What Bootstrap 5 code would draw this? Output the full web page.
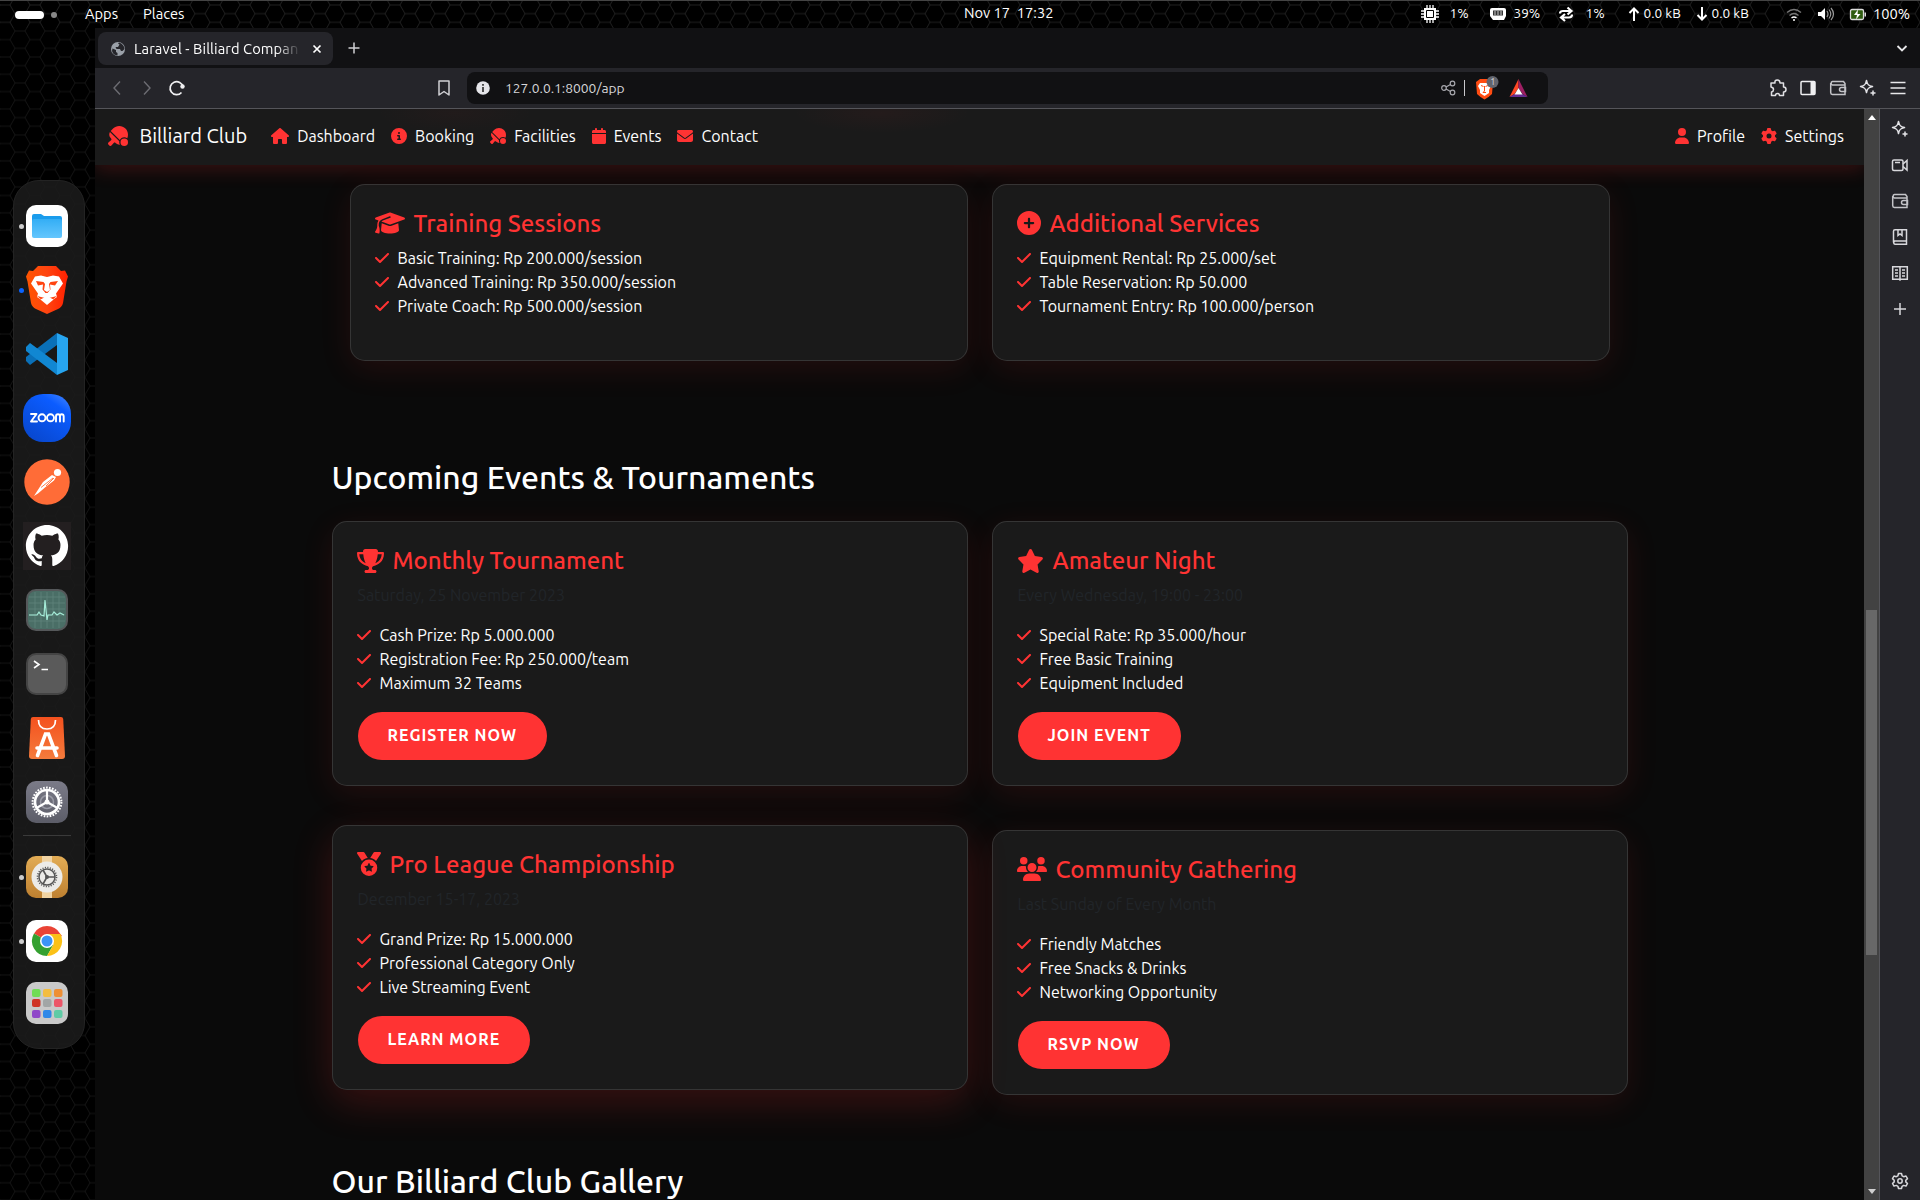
<!DOCTYPE html>
<html lang="en" data-bs-theme="dark">
<head>
<meta charset="utf-8">
<title>Laravel - Billiard Company</title>
<link href="https://cdn.jsdelivr.net/npm/bootstrap@5.3.0/dist/css/bootstrap.min.css" rel="stylesheet">
<style>
:root { --red: #ff3333; --chrome: #25252a; --strip: #111113; }
body { width: 1920px; height: 1200px; overflow: hidden; background: #000; color: #fff; font-family: Ubuntu, "Noto Sans", sans-serif; font-size: 16px; line-height: 24px; }
svg { display: block; flex: none; }
span { white-space: nowrap; display: inline-block; }
.wallpaper { position: absolute; inset: 0; }
.desktop { position: relative; width: 1920px; height: 1200px; }
/* top panel */
.panel { height: 28px; border-top: 1px solid #444; font-size: 14.667px; line-height: 25px; display: grid; grid-template-columns: 85px 58px 821px 456px 500px; }
.panel-status { display: grid; height: 25px; grid-template-columns: 30px 38px 26px 42px 30px 40px 18px 50px 18px 72px 31px 34px 24px 47px; align-items: center; }
.clock { line-height: 23px; }
.net { font-size: 13.6px; margin-left: -.5px; }
.pill { width: 29px; height: 8px; border-radius: 4px; background: #fff; margin-left: 15px; }
.pill-dot { width: 6px; height: 6px; border-radius: 50%; background: #888; margin-left: 7px; }
/* dock */
.dock-col { width: 95px; padding: 152px 0 0 13px; }
.dock { width: 72px; height: 869px; border-radius: 26px; background: rgba(28,28,28,.86); border: 1px solid #232323; padding-top: 13px; }
.dock-item { height: 64px; width: 66px; display: flex; align-items: center; justify-content: center; position: relative; }
.dock-item.running::before { content: ""; position: absolute; left: 5px; width: 5px; height: 5px; border-radius: 50%; background: #ccc; }
.dock-item.focused::before { background: #0a63ff; }
.dock-sep { width: 48px; height: 1px; margin: 1px 9px 9px; background: #3a3a3a; }
/* browser */
.tabstrip { height: 40px; background: var(--strip); padding: 4px 0 0 3px; font-size: 14.667px; }
.tab-box { width: 235px; height: 33px; border-radius: 8px; background: var(--chrome); padding: 0 10px 0 12px; }
.tab-title { width: 167px; overflow: hidden; margin-left: 8px; letter-spacing: .1px; -webkit-mask-image: linear-gradient(90deg,#000 85%,transparent); mask-image: linear-gradient(90deg,#000 85%,transparent); }
.tab-add { margin: 10px 0 0 15px; }
.tab-list { margin: 10px 12px 0 0; }
.toolbar { height: 41px; background: var(--chrome); border-bottom: 1px solid #55555a; padding-left: 12px; }
.bookmark-icon { margin-left: 167px; }
.tools { gap: 10px; margin-right: 12px; }
.urlbar { width: 1081px; height: 32px; border-radius: 8px; background: var(--strip); padding: 0 15px 0 8px; font-size: 13.8px; color: #d5d5d8; margin-left: 13px; }
.url-text { margin-left: 14px; }
.page { width: 1769px; height: 1091px; background: #0a0a0a; overflow: hidden; }
.scroller { width: 15px; background: #424242; height: 1091px; padding: 5px 2px; }
.thumb { width: 11px; height: 345px; background: #686868; margin-top: 490px; }
.side { width: 41px; height: 1091px; background: var(--chrome); border-left: 1px solid #55555a; padding: 10px 0 9px; }
.side > svg { margin-bottom: 16px; }
/* site */
.site-nav { height: 56px; padding: 0 12px 2px 12.5px; position: relative; z-index: 1; box-shadow: 0 4px 20px rgba(255,51,51,.2);
  background: radial-gradient(80px 20px at 360px 4px,rgba(255,51,51,.03),transparent), radial-gradient(90px 20px at 787px 4px,rgba(255,51,51,.045),transparent), #1a1a1a; }
.site-nav .nav-link { color: #fff; padding: 0 8px; line-height: 24px; }
.site-nav .navbar-brand { font-size: 20px; margin-right: 16px; }
.site-nav svg, .panel-card svg { fill: var(--red); }
.site-body { max-width: 1320px; }
.panel-card { background: #1a1a1a; border: 1px solid rgba(255,255,255,.12); border-radius: 15px; padding: 25px; color: #fff; box-shadow: 0 8px 32px rgba(255,51,51,.1); }
.panel-card.raised { transform: translateY(-5px); box-shadow: 0 12px 40px rgba(255,51,51,.2); }
.panel-card h4 { color: var(--red); font-size: 24px; line-height: 28.8px; font-weight: 500; margin-bottom: 8px; display: flex; align-items: center; gap: 8px; }
.panel-card h4 svg { height: 24px; margin-top: -2px; }
.panel-card svg { margin-left: -.5px; margin-right: .5px; }
.panel-card p { color: #212529; margin: -1px 0 17px; }
.panel-card li { display: flex; align-items: center; gap: 8px; height: 24px; padding-bottom: 2px; }
.pricing { padding: 19px 18px 0; margin-bottom: 97px; }
.sec-title { font-size: 32px; line-height: 38.4px; font-weight: 500; margin-bottom: 25px; }
.btn-club { background: var(--red); color: #fff; border: 0; border-radius: 25px; height: 48px; padding: 0 30px 2px; font-weight: 500; letter-spacing: 1px; }
.btn-club span { font-weight: 600; }
.events { row-gap: 44px; margin-bottom: 67px; }
.wide { height: 1200px; }
</style>
<script src="https://cdn.jsdelivr.net/npm/bootstrap@5.3.0/dist/js/bootstrap.bundle.min.js"></script>
</head>
<body>
<svg width="0" height="0" class="position-absolute">
  <defs>
    <symbol id="check" viewBox="0 0 448 512"><path d="M438.6 105.4c12.5 12.5 12.5 32.8 0 45.3l-256 256c-12.5 12.5-32.8 12.5-45.3 0l-128-128c-12.5-12.5-12.5-32.8 0-45.3s32.8-12.5 45.3 0L160 338.7 393.4 105.4c12.5-12.5 32.8-12.5 45.3 0z"/></symbol>
    <symbol id="paddle" viewBox="64 0 512 512"><path d="M480 288c-50.1 0-93.6 28.8-114.6 70.8L132.9 126.3l.6-.6 60.1-60.1c87.5-87.5 229.3-87.5 316.8 0c67.1 67.1 82.7 166.3 46.8 248.3C535.8 297.6 509 288 480 288zM113.3 151.9L354.1 392.7c-1.4 7.5-2.1 15.3-2.1 23.3c0 23.2 6.2 44.9 16.9 63.7c-3 .2-6.1 .3-9.2 .3H357c-33.9 0-66.5-13.5-90.5-37.5l-9.8-9.8c-13.1-13.1-34.6-12.4-46.8 1.7L152.2 501c-5.8 6.7-14.2 10.7-23 11s-17.5-3.1-23.8-9.4l-32-32c-6.3-6.3-9.7-14.9-9.4-23.8s4.3-17.2 11-23l66.6-57.7c14-12.2 14.8-33.7 1.7-46.8l-9.8-9.8C109.5 285.5 96 252.9 96 219v-2.7c0-22.6 6.1-44.7 17.3-64.4zM480 320a96 96 0 1 1 0 192 96 96 0 1 1 0-192z"/></symbol>
    <symbol id="sparkle" viewBox="0 0 20 20"><path d="M8.5 2.500c.7 4 2 5.300 6 6-4 .7-5.300 2-6 6-.7-4-2-5.300-6-6 4-.7 5.300-2 6-6zM15 12.500v5M12.500 15h5" fill="none" stroke="#e4e4e8" stroke-width="1.500" stroke-linejoin="round"/></symbol>
    <symbol id="wallet" viewBox="0 0 20 20"><g fill="none" stroke="#c4c4c8" stroke-width="1.500"><path d="M17 7V5.500L15.500 3.500H4.500a1.800 1.800 0 0 0 0 3.500H17v9.500H4.500a2 2 0 0 1-1.800-2V5"/><path d="M17.500 9.500h-4a2 2 0 0 0 0 4h4z"/></g></symbol>
    <linearGradient id="gFold" x2="0" y2="1"><stop stop-color="#34aef5"/><stop offset="1" stop-color="#64c6fd"/></linearGradient>
    <linearGradient id="gBrave"><stop stop-color="#ff5500"/><stop offset=".5" stop-color="#ff4410"/><stop offset="1" stop-color="#ff2000"/></linearGradient>
    <linearGradient id="gZoom" x1="1" y1="0" x2=".3" y2="1"><stop stop-color="#4a8bff"/><stop offset=".3" stop-color="#0b5cff"/><stop offset="1" stop-color="#0848d0"/></linearGradient>
    <linearGradient id="gStore" x2="0" y2="1"><stop stop-color="#f4511e"/><stop offset="1" stop-color="#f47b3c"/></linearGradient>
    <linearGradient id="gSet" x2="0" y2="1"><stop stop-color="#7b7b88"/><stop offset="1" stop-color="#5c5d68"/></linearGradient>
    <linearGradient id="gTweak" x2="0" y2="1"><stop stop-color="#e2ac55"/><stop offset="1" stop-color="#be8030"/></linearGradient>
    <pattern id="hex" width="30" height="17.320" patternUnits="userSpaceOnUse" patternTransform="translate(20 5)"><path d="M0 8.660H5L10 0H20L25 8.660H30M25 8.660L20 17.320H10L5 8.660" fill="none" stroke="#262626" stroke-width=".8"/></pattern>
  </defs>
</svg>
<div class="desktop">
  <svg class="wallpaper" width="1920" height="1200"><rect width="1920" height="1200" fill="#000"/><rect width="1920" height="28" fill="url(#hex)"/><rect y="28" width="95" height="1172" fill="url(#hex)" opacity=".65"/></svg>

  <header class="panel position-relative">
    <div class="d-flex align-items-center"><div class="pill"></div><div class="pill-dot"></div></div>
    <div><span>Apps</span></div>
    <div><span>Places</span></div>
    <div class="clock"><span>Nov 17&nbsp; 17:32</span></div>
    <div class="panel-status">
      <svg width="20" height="20" viewBox="0 0 20 20"><path d="M4 4h12v12H4z" fill="#fff"/><path d="M7 1v3M10 1v3M13 1v3M7 16v3M10 16v3M13 16v3M1 7h3M1 10h3M1 13h3M16 7h3M16 10h3M16 13h3" stroke="#fff" stroke-width="1.300"/><path d="M6.500 6.500h7v7h-7z" stroke="#000" fill="#fff"/></svg>
      <span class="net">1%</span>
      <svg width="20" height="20" viewBox="0 0 20 20"><path d="M4 4h12q2 0 2 2v6l-2 4H5l-3-4V6q0-2 2-2z" fill="#fff"/><path d="M5 6.500h10v5H5z" fill="#333"/><path d="M7 7v4M10 7v4M13 7v4" stroke="#ccc"/></svg>
      <span class="net">39%</span>
      <svg width="20" height="20" viewBox="0 0 20 20" fill="none" stroke="#fff" stroke-width="2.200"><path d="M4 9.500Q4 7 7 7h8M11.500 3.500 15.500 7l-4 3.500M16 10.500q0 3-3 3H6M9 10l-4 3.500L9 17"/></svg>
      <span class="net">1%</span>
      <svg width="16" height="16" viewBox="0 0 16 16" fill="none" stroke="#fff" stroke-width="2"><path d="M8 15V2M3.500 7 8 2.500 12.500 7"/></svg>
      <span class="net">0.0 kB</span>
      <svg width="16" height="16" viewBox="0 0 16 16" fill="none" stroke="#fff" stroke-width="2"><path d="M8 1v13M3.500 9 8 13.500 12.500 9"/></svg>
      <span class="net">0.0 kB</span>
      <svg width="20" height="18" viewBox="0 0 20 18" fill="none" stroke="#777" stroke-width="1.400"><path d="M3 7.500q7-6 14 0M5.500 10.500q4.500-4 9 0" /><path d="M7.500 13q2.500-2 5 0" stroke="#fff"/><circle cx="10" cy="15" r="1" fill="#fff" stroke="none"/></svg>
      <svg width="20" height="18" viewBox="0 0 20 18"><path d="M3 7h3l4-4v12l-4-4H3z" fill="#fff"/><path d="M12 6q2 3 0 6M14 4.500q3.500 4.500 0 9M16 3q5 6 0 12" fill="none" stroke="#999" stroke-width="1.200"/></svg>
      <svg width="20" height="18" viewBox="0 0 20 18"><rect x="1.500" y="4.500" width="13" height="10" rx="1.500" fill="#2f5c10" stroke="#ddd" stroke-width="1.300"/><path d="M15.500 7.500h1.500v4h-1.500z" fill="#ddd"/><path d="M9 4.500 5 10h3l-1 4.500L11.500 9H8.500z" fill="#fff"/></svg>
      <span>100%</span>
    </div>
  </header>

  <div class="d-flex position-relative">
    <aside class="dock-col">
      <div class="dock">
        <div class="dock-item running"><svg width="42" height="42" viewBox="0 0 42 42"><rect width="42" height="42" rx="10" fill="#fff"/><path d="M6 11q0-2 2-2h7l3 2h16q2 0 2 2v6H6z" fill="#1a9cec"/><rect x="6" y="14" width="30" height="19" rx="2" fill="url(#gFold)"/></svg></div>
        <div class="dock-item running focused"><svg width="42" height="48" viewBox="0 0 42 48"><path d="M12 0h18l5 5 4-.5 3 6-1.500 5L37 37q-1 4-5 6l-11 5-11-5q-4-2-5-6L1.500 15.500 0 10.500l3-6 4 .5z" fill="url(#gBrave)"/><path d="M9 10.500l6-1 6 1.500 6-1.500 6 1 4 7-7 10 1 3.500-10 6.500-10-6.500 1-3.500-7-10z" fill="#fff"/><path d="M10 15l7.500 1 1.500 2-1 6 3 2 3-2-1-6 1.500-2 7.500-1-3 4.500-5-1 .5 5-3 3.500h-2l-3-3.500.5-5-5 1z" fill="#ff4410"/><path d="M11 30l10 2.500L31 30l-6 5-4 2.500-4-2.500z" fill="#ff4410"/><path d="M14.500 33.500 21 30l6.500 3.500L21 39z" fill="#fff"/></svg></div>
        <div class="dock-item"><svg width="42" height="42" viewBox="0 0 42 42"><path d="M31 0v12L4 32 0 28v-4z" fill="#0a70b8"/><path d="M31 42V30L4 10 0 14v4z" fill="#1187d2"/><path d="M31 0l11 5v32l-11 5z" fill="#27a5f0"/></svg></div>
        <div class="dock-item"><svg width="48" height="48" viewBox="0 0 48 48"><rect width="48" height="48" rx="20" fill="url(#gZoom)"/><g fill="none" stroke="#fff" stroke-width="1.900" stroke-linejoin="round" stroke-linecap="round"><path d="M8 20h5.500L8 27.500h6"/><circle cx="19" cy="23.800" r="3.500"/><circle cx="27.500" cy="23.800" r="3.500"/><path d="M33 27.500v-5q0-2.300 2-2.300t2 2.300v5M37 22.500q0-2.300 1.800-2.300t1.900 2.300v5"/></g></svg></div>
        <div class="dock-item"><svg width="46" height="46" viewBox="0 0 46 46"><circle cx="23" cy="23" r="22.700" fill="#ff6c37"/><circle cx="33.500" cy="13.500" r="3.600" fill="#fff"/><path d="M10 37l9-14 9-7 4 2-2 3.500-9 7-7 6z" fill="#fff"/><path d="M17 28.500l12-9.500M22 27l8-8" stroke="#ff6c37" stroke-width=".9"/></svg></div>
        <div class="dock-item"><svg width="48" height="48" viewBox="-3 -3 30 30"><path d="M-3-3h30v30h-30z" fill="#231f20"/><path transform="translate(-1.200 -1.200) scale(1.100)" d="M12 0C5.374 0 0 5.373 0 12c0 5.302 3.438 9.800 8.207 11.387.599.111.793-.261.793-.577v-2.234c-3.338.726-4.033-1.416-4.033-1.416-.546-1.387-1.333-1.756-1.333-1.756-1.089-.745.083-.729.083-.729 1.205.084 1.839 1.237 1.839 1.237 1.070 1.834 2.807 1.304 3.492.997.107-.775.418-1.305.762-1.604-2.665-.305-5.467-1.334-5.467-5.931 0-1.311.469-2.381 1.236-3.221-.124-.303-.535-1.524.117-3.176 0 0 1.008-.322 3.301 1.230A11.509 11.509 0 0 1 12 5.803c1.020.005 2.047.138 3.006.404 2.291-1.552 3.297-1.230 3.297-1.230.653 1.653.242 2.874.118 3.176.770.840 1.235 1.911 1.235 3.221 0 4.609-2.807 5.624-5.479 5.921.430.372.823 1.102.823 2.222v3.293c0 .319.192.694.801.576C20.566 21.797 24 17.300 24 12c0-6.627-5.373-12-12-12z" fill="#fff"/></svg></div>
        <div class="dock-item"><svg width="42" height="42" viewBox="0 0 42 42"><rect x="1" y="1" width="40" height="40" rx="9" fill="#4a6e66" stroke="#55585a" stroke-width="2"/><path d="M3 8h36M3 14h36M3 20h36M3 26h36M3 32h36M9 3v36M15 3v36M21 3v36M27 3v36M33 3v36" stroke="#63887f" stroke-width=".7"/><path d="M3 26h8l2-3 2 3 3 1 1-16 2 20 1-5h4l2-3 3 3 3-2 4 2" fill="none" stroke="#a5ecd8" stroke-width="1.200"/></svg></div>
        <div class="dock-item"><svg width="42" height="42" viewBox="0 0 42 42"><rect x="1" y="1" width="40" height="40" rx="9" fill="#5a5a5a" stroke="#444" stroke-width="2"/><path d="M8 8l5 3.500L8 15M15.500 16.500H22" fill="none" stroke="#fff" stroke-width="1.600"/></svg></div>
        <div class="dock-item"><svg width="36" height="42" viewBox="0 0 36 42"><path d="M4 0h28q2 0 2.200 2L36 39q0 3-3 3H3q-3 0-3-3L1.800 2Q2 0 4 0z" fill="url(#gStore)"/><path d="M9.500 3q0 9 8.500 9t8.500-9" fill="none" stroke="#fff" stroke-width="1.700"/><path d="M8.500 38.500 16.500 17h3l8 21.500M8 31h20" fill="none" stroke="#fff" stroke-width="3.600" stroke-linecap="round"/></svg></div>
        <div class="dock-item"><svg width="42" height="42" viewBox="0 0 42 42"><rect width="42" height="42" rx="10" fill="url(#gSet)"/><circle cx="21" cy="21" r="12" fill="none" stroke="#fff" stroke-width="2.600"/><circle cx="21" cy="21" r="14.400" fill="none" stroke="#fff" stroke-width="2" stroke-dasharray="1.700 1.320"/><circle cx="21" cy="21" r="6.500" fill="none" stroke="#999aa5" stroke-width="1.500"/><path d="M21 21V9M21 21l-10.500 6M21 21l10.500 6" stroke="#fff" stroke-width="2.200"/><circle cx="21" cy="21" r="2.500" fill="#fff"/></svg></div>
        <div class="dock-sep"></div>
        <div class="dock-item running"><svg width="42" height="42" viewBox="0 0 42 42"><rect width="42" height="42" rx="10" fill="url(#gTweak)"/><path d="M16 0h10v42H16z" fill="#f0d3a2"/><circle cx="21" cy="21" r="15.500" fill="#ecebe8"/><circle cx="21" cy="21" r="8" fill="none" stroke="#555" stroke-width="1.500"/><circle cx="21" cy="21" r="9.500" fill="none" stroke="#555" stroke-width="1.600" stroke-dasharray="1.100 1.390"/><path d="M21 21h8M21 21l-4-7M21 21l-4 7" stroke="#555" stroke-width="1.600"/><circle cx="21" cy="21" r="2" fill="#555"/></svg></div>
        <div class="dock-item running"><svg width="42" height="42" viewBox="0 0 42 42"><rect width="42" height="42" rx="10" fill="#fff"/><path d="M21 21 8 13.500A15 15 0 0 1 34 13.500L36 16z" fill="#ea4335"/><path d="M8 13.500A15 15 0 0 0 21 36l6.500-11.500L21 21z" fill="#34a030"/><path d="M21 14h13.400A15 15 0 0 1 21 36l6.500-11.500z" fill="#fbc116"/><circle cx="21" cy="21" r="7" fill="#fff"/><circle cx="21" cy="21" r="5.500" fill="#3b94f5"/></svg></div>
        <div class="dock-item pb-1"><svg width="42" height="42" viewBox="0 0 42 42"><rect width="42" height="42" rx="10" fill="#c9c9c9"/><g><rect x="6" y="7" width="8.500" height="8" rx="2" fill="#70dc55"/><rect x="17" y="7" width="8.500" height="8" rx="2" fill="#f3bd40"/><rect x="28" y="7" width="8.500" height="8" rx="2" fill="#ee8f35"/><rect x="6" y="17" width="8.500" height="8" rx="2" fill="#cf3325"/><rect x="17" y="17" width="8.500" height="8" rx="2" fill="#a2a6a6"/><rect x="28" y="17" width="8.500" height="8" rx="2" fill="#ec5568"/><rect x="6" y="28" width="8.500" height="8" rx="2" fill="#8f48c8"/><rect x="17" y="28" width="8.500" height="8" rx="2" fill="#2e88e8"/><rect x="28" y="28" width="8.500" height="8" rx="2" fill="#5fcba5"/></g></svg></div>
      </div>
    </aside>

    <main class="flex-grow-1">
      <div class="tabstrip d-flex">
        <div class="tab-box d-flex align-items-center">
          <svg width="16" height="16" viewBox="0 0 16 16"><circle cx="8" cy="8" r="7" fill="#9aa0a8"/><path d="M2.500 7.500 6 9v2l1.500 1v2.500Q3 14 2 10zM8 2.500l1.500 1L8 6H5.500l1 2H10l1 2h1.500l2-2Q14 3 9 1.500z" fill="#25252a"/></svg>
          <div class="tab-title"><span>Laravel - Billiard Compan</span></div>
          <svg width="12" height="12" viewBox="0 0 12 12" class="ms-auto"><path d="M2.500 2.500l7 7M9.500 2.500l-7 7" stroke="#fff" stroke-width="1.700"/></svg>
        </div>
        <svg class="tab-add" width="12" height="12" viewBox="0 0 12 12"><path d="M6 .5v11M.5 6h11" stroke="#d0d0d4" stroke-width="1.500"/></svg>
        <svg class="tab-list ms-auto" width="12" height="12" viewBox="0 0 12 12"><path d="M1.500 4 6 8.500 10.500 4" fill="none" stroke="#e8e8ea" stroke-width="1.800"/></svg>
      </div>
      <div class="toolbar d-flex align-items-center">
        <svg width="160" height="20" viewBox="0 0 160 20" fill="none"><path d="M13 3.500 7 10l6 6.500M37 3.500l6 6.500-6 6.500" stroke="#6c6c72" stroke-width="1.400"/><path d="M76 9a6.500 6.500 0 1 0-1.500 5.500" stroke="#f0f0f2" stroke-width="1.700"/><circle cx="75.500" cy="8.500" r="2.200" fill="#f0f0f2"/></svg>
        <svg class="bookmark-icon" width="20" height="20" viewBox="0 0 20 20"><path d="M5 3h10v14l-5-3.500L5 17z" fill="none" stroke="#d0d0d4" stroke-width="1.500" stroke-linejoin="round"/></svg>
        <div class="urlbar d-flex align-items-center">
          <svg width="16" height="16" viewBox="0 0 16 16"><circle cx="8" cy="8" r="6.800" fill="#e6e6ea"/><path d="M8 4v1.800M8 7v5" stroke="#333" stroke-width="1.700"/></svg>
          <span class="url-text">127.0.0.1:8000/app</span>
          <svg class="ms-auto" width="96" height="26" viewBox="0 0 96 26">
            <g fill="none" stroke="#a8a8ae" stroke-width="1.200"><circle cx="7" cy="13" r="2.300"/><circle cx="15.500" cy="8.500" r="2.300"/><circle cx="15.500" cy="17.500" r="2.300"/><path d="M9 12l4.500-2.500M9 14l4.500 2.500"/></g><path d="M27.500 5v16" stroke="#c8c8cc"/>
            <path d="M43 4h9l4 3-1 12q-3 3-7.500 5.500Q43 22 40 19L39 7z" fill="#ff4c12"/><path d="M43 8h9l2 3-2 4 0 3-4.500 3-4.500-3 0-3-2-4z" fill="#fff"/><path d="M44 10.500l2.500 1M51 10.500l-2.500 1M47.500 11v5l-1.500 1.500h3" stroke="#ff4c12" fill="none"/>
            <circle cx="55.500" cy="7" r="6" fill="#62656e"/><text x="53.300" y="10.200" font-size="9" fill="#ddd">1</text>
            <path d="M81.500 4v9l-4 6-5 3z" fill="#ff4724"/><path d="M81.500 4v9l4 6 5 3z" fill="#9e1f63"/><path d="M72.500 22l5-3h8l5 3z" fill="#662d91"/><path d="M81.500 13l4 6.500h-8z" fill="#fff"/></svg>
        </div>
        <div class="tools ms-auto d-flex">
          <svg width="20" height="20" viewBox="0 0 20 20"><path d="M3 5h4q-.5-3 2.200-3T12 5h3.500v4Q18 9 18 11.500T15.500 14v3.500h-4q0-2-2-2t-2 2H3.500V14q2-.5 2-2.500T3 9z" fill="none" stroke="#e0e0e4" stroke-width="1.500" stroke-linejoin="round"/></svg>
          <svg width="20" height="20" viewBox="0 0 20 20"><rect x="3" y="3.500" width="14" height="13" rx="1" fill="none" stroke="#f0f0f2" stroke-width="1.500"/><path d="M12.500 3.500H17v13h-4.500z" fill="#f0f0f2"/></svg>
          <svg width="20" height="20"><use href="#wallet"/></svg>
          <svg width="20" height="20"><use href="#sparkle"/></svg>
          <svg width="20" height="20" viewBox="0 0 20 20"><path d="M2.500 4.500h15M2.500 10h15M2.500 15.500h15" stroke="#e8e8ea" stroke-width="1.500"/></svg>
        </div>
      </div>

      <div class="d-flex">
        <div class="page"><div class="wide">
          <nav class="site-nav d-flex align-items-center">
            <a class="navbar-brand d-flex align-items-center text-white"><svg width="20" height="20" class="me-2"><use href="#paddle"/></svg><span class="ms-1">Billiard Club</span></a>
            <a class="nav-link d-flex align-items-center"><svg class="me-2" width="18" height="16" viewBox="0 0 576 512"><path d="M575.8 255.5c0 18-15 32.1-32 32.1h-32l.7 160.2c0 2.7-.2 5.400-.5 8.100V472c0 22.100-17.900 40-40 40H392c-22.100 0-40-17.900-40-40V384c0-17.700-14.300-32-32-32H256c-17.700 0-32 14.300-32 32v88c0 22.100-17.900 40-40 40H104c-22.100 0-40-17.900-40-40V287.600H32c-18 0-32-14-32-32.100c0-9 3-17 10-24L266.400 8c7-7 15-8 22-8s15 2 21 7L564.800 231.500c8 7 12 15 11 24z"/></svg><span>Dashboard</span></a>
            <a class="nav-link d-flex align-items-center"><svg class="me-2" width="16" height="16" viewBox="0 0 512 512"><path d="M256 512A256 256 0 1 0 256 0a256 256 0 1 0 0 512zM216 336h24V272H216c-13.300 0-24-10.700-24-24s10.700-24 24-24h48c13.300 0 24 10.700 24 24v88h8c13.300 0 24 10.700 24 24s-10.700 24-24 24H216c-13.300 0-24-10.700-24-24s10.700-24 24-24zm40-208a32 32 0 1 1 0 64 32 32 0 1 1 0-64z"/></svg><span>Booking</span></a>
            <a class="nav-link d-flex align-items-center"><svg class="me-2" width="16" height="16"><use href="#paddle"/></svg><span>Facilities</span></a>
            <a class="nav-link d-flex align-items-center"><svg class="me-2" width="14" height="16" viewBox="0 0 448 512"><path d="M96 32V64H48C21.500 64 0 85.500 0 112v48H448V112c0-26.500-21.500-48-48-48H352V32c0-17.700-14.300-32-32-32s-32 14.300-32 32V64H160V32c0-17.700-14.300-32-32-32S96 14.300 96 32zM448 192H0V464c0 26.500 21.500 48 48 48H400c26.500 0 48-21.500 48-48V192z"/></svg><span>Events</span></a>
            <a class="nav-link d-flex align-items-center"><svg class="me-2" width="16" height="16" viewBox="0 0 512 512"><path d="M48 64C21.500 64 0 85.500 0 112c0 15.100 7.100 29.300 19.200 38.400L236.800 313.600c11.400 8.500 27 8.500 38.400 0L492.800 150.400c12.100-9.100 19.200-23.300 19.200-38.400c0-26.500-21.500-48-48-48H48zM0 176V384c0 35.300 28.700 64 64 64H448c35.300 0 64-28.700 64-64V176L294.400 339.200c-22.800 17.100-54 17.100-76.800 0L0 176z"/></svg><span>Contact</span></a>
            <a class="nav-link d-flex align-items-center ms-auto"><svg class="me-2" width="14" height="16" viewBox="0 0 448 512"><path d="M224 256A128 128 0 1 0 224 0a128 128 0 1 0 0 256zm-45.700 48C79.800 304 0 383.800 0 482.300C0 498.700 13.300 512 29.700 512H418.300c16.400 0 29.700-13.300 29.700-29.700C448 383.800 368.200 304 269.700 304H178.300z"/></svg><span>Profile</span></a>
            <a class="nav-link d-flex align-items-center"><svg class="me-2" width="16" height="16" viewBox="0 0 512 512"><path d="M495.900 166.600c3.200 8.700 .5 18.400-6.400 24.600l-43.300 39.400c1.100 8.300 1.700 16.800 1.700 25.400s-.6 17.100-1.700 25.400l43.300 39.400c6.900 6.200 9.600 15.900 6.400 24.600c-4.400 11.900-9.700 23.300-15.800 34.300l-4.700 8.100c-6.600 11-14 21.400-22.100 31.200c-5.900 7.200-15.700 9.600-24.500 6.800l-55.700-17.700c-13.400 10.300-28.200 18.900-44 25.400l-12.500 57.100c-2 9.100-9 16.300-18.200 17.800c-13.800 2.300-28 3.500-42.500 3.500s-28.700-1.200-42.500-3.500c-9.200-1.500-16.200-8.700-18.200-17.800l-12.500-57.100c-15.800-6.500-30.600-15.100-44-25.400L83.100 425.900c-8.800 2.800-18.600 .3-24.500-6.800c-8.100-9.800-15.500-20.200-22.100-31.200l-4.700-8.100c-6.100-11-11.400-22.400-15.800-34.300c-3.200-8.700-.5-18.400 6.400-24.600l43.300-39.400C64.600 273.100 64 264.600 64 256s.6-17.100 1.700-25.400L22.400 191.200c-6.900-6.200-9.600-15.900-6.400-24.600c4.400-11.900 9.700-23.300 15.800-34.300l4.700-8.100c6.600-11 14-21.400 22.100-31.200c5.900-7.200 15.700-9.600 24.500-6.800l55.700 17.700c13.400-10.300 28.200-18.900 44-25.400l12.500-57.100c2-9.100 9-16.300 18.200-17.800C227.300 1.200 241.500 0 256 0s28.700 1.200 42.500 3.500c9.200 1.500 16.200 8.700 18.200 17.800l12.500 57.100c15.800 6.500 30.600 15.100 44 25.400l55.700-17.700c8.800-2.800 18.600-.3 24.500 6.800c8.100 9.800 15.500 20.200 22.100 31.200l4.700 8.100c6.100 11 11.400 22.400 15.800 34.300zM256 336a80 80 0 1 0 0-160 80 80 0 1 0 0 160z"/></svg><span>Settings</span></a>
          </nav>

          <div class="container site-body">
            <section class="pricing"><div class="row">
              <div class="col-6"><div class="panel-card">
                <h4><svg width="30" viewBox="0 0 640 512"><path d="M320 32c-8.100 0-16.100 1.400-23.700 4.100L15.800 137.400C6.300 140.900 0 149.900 0 160s6.300 19.100 15.800 22.600l57.900 20.900C57.300 229.300 48 259.800 48 291.900v28.100c0 28.400-10.800 57.700-22.300 80.800c-6.500 13-13.900 25.800-22.500 37.600C0 442.700-.9 448.300 .9 453.400s6 8.900 11.200 10.200l64 16c4.200 1.100 8.700 .3 12.400-2s6.300-6.100 7.100-10.400c8.600-42.800 4.300-81.200-2.100-108.700C90.300 344.300 86 329.800 80 316.500V291.900c0-30.200 10.200-58.700 27.900-81.500c12.900-15.500 29.600-28 49.200-35.700l157-61.700c8.200-3.200 17.500 .8 20.700 9s-.8 17.500-9 20.700l-157 61.700c-12.400 4.900-23.300 12.400-32.200 21.600l159.600 57.600c7.600 2.700 15.600 4.100 23.700 4.100s16.100-1.400 23.700-4.100L624.200 182.600c9.500-3.400 15.800-12.500 15.800-22.600s-6.300-19.100-15.800-22.600L343.700 36.100C336.100 33.400 328.100 32 320 32zM128 408c0 35.300 86 72 192 72s192-36.700 192-72L496.700 262.600 354.500 314c-11.100 4-22.800 6-34.500 6s-23.500-2-34.500-6L143.300 262.600 128 408z"/></svg><span>Training Sessions</span></h4>
                <ul class="list-unstyled mb-3">
                  <li><svg width="14" height="16"><use href="#check"/></svg><span>Basic Training: Rp 200.000/session</span></li>
                  <li><svg width="14" height="16"><use href="#check"/></svg><span>Advanced Training: Rp 350.000/session</span></li>
                  <li><svg width="14" height="16"><use href="#check"/></svg><span>Private Coach: Rp 500.000/session</span></li>
                </ul></div></div>
              <div class="col-6"><div class="panel-card">
                <h4><svg width="24" viewBox="0 0 512 512"><path d="M256 512A256 256 0 1 0 256 0a256 256 0 1 0 0 512zM232 344V280H168c-13.300 0-24-10.700-24-24s10.700-24 24-24h64V168c0-13.300 10.700-24 24-24s24 10.700 24 24v64h64c13.300 0 24 10.700 24 24s-10.700 24-24 24H280v64c0 13.300-10.700 24-24 24s-24-10.700-24-24z"/></svg><span>Additional Services</span></h4>
                <ul class="list-unstyled mb-3">
                  <li><svg width="14" height="16"><use href="#check"/></svg><span>Equipment Rental: Rp 25.000/set</span></li>
                  <li><svg width="14" height="16"><use href="#check"/></svg><span>Table Reservation: Rp 50.000</span></li>
                  <li><svg width="14" height="16"><use href="#check"/></svg><span>Tournament Entry: Rp 100.000/person</span></li>
                </ul></div></div>
            </div></section>

            <h2 class="sec-title"><span>Upcoming Events &amp; Tournaments</span></h2>
            <div class="row events">
              <div class="col-6"><div class="panel-card">
                <h4><svg width="27" viewBox="0 0 576 512"><path d="M400 0H176c-26.500 0-48.100 21.800-47.100 48.200c.2 5.300 .4 10.600 .7 15.800H24C10.700 64 0 74.700 0 88c0 92.600 33.500 157 78.500 200.700c44.300 43.100 98.300 64.800 138.100 75.800c23.400 6.500 39.400 26 39.400 45.600c0 20.900-17 37.900-37.900 37.900H192c-17.700 0-32 14.300-32 32s14.300 32 32 32H384c17.700 0 32-14.300 32-32s-14.300-32-32-32H357.900C337 448 320 431 320 410.100c0-19.600 15.900-39.200 39.400-45.600c39.900-11 93.900-32.700 138.200-75.800C542.500 245 576 180.600 576 88c0-13.300-10.700-24-24-24H446.400c.3-5.200 .5-10.400 .7-15.800C448.100 21.800 426.500 0 400 0zM48.900 112h84.400c9.100 90.100 29.200 150.300 51.900 190.600c-24.900-11-50.800-26.500-73.200-48.300c-32-31.100-58-76-63-142.300zM464.100 254.300c-22.400 21.800-48.300 37.300-73.200 48.300c22.700-40.300 42.800-100.500 51.900-190.600h84.400c-5.100 66.300-31.100 111.200-63 142.300z"/></svg><span>Monthly Tournament</span></h4>
                <p><span>Saturday, 25 November 2023</span></p>
                <ul class="list-unstyled mb-3">
                  <li><svg width="14" height="16"><use href="#check"/></svg><span>Cash Prize: Rp 5.000.000</span></li>
                  <li><svg width="14" height="16"><use href="#check"/></svg><span>Registration Fee: Rp 250.000/team</span></li>
                  <li><svg width="14" height="16"><use href="#check"/></svg><span>Maximum 32 Teams</span></li>
                </ul>
                <button class="btn btn-club"><span>REGISTER NOW</span></button></div></div>
              <div class="col-6"><div class="panel-card">
                <h4><svg width="27" viewBox="0 0 576 512"><path d="M316.900 18C311.600 7 300.400 0 288.100 0s-23.400 7-28.800 18L195 150.300 51.400 171.500c-12 1.800-22 10.200-25.700 21.700s-.7 24.200 7.900 32.700L137.800 329 113.200 474.700c-2 12 3 24.200 12.900 31.300s23 8 33.800 2.300l128.300-68.500 128.300 68.500c10.800 5.700 23.900 4.900 33.800-2.300s14.900-19.300 12.900-31.300L438.500 329 542.700 225.900c8.600-8.500 11.700-21.200 7.900-32.700s-13.700-19.900-25.700-21.700L381.200 150.300 316.900 18z"/></svg><span>Amateur Night</span></h4>
                <p><span>Every Wednesday, 19:00 - 23:00</span></p>
                <ul class="list-unstyled mb-3">
                  <li><svg width="14" height="16"><use href="#check"/></svg><span>Special Rate: Rp 35.000/hour</span></li>
                  <li><svg width="14" height="16"><use href="#check"/></svg><span>Free Basic Training</span></li>
                  <li><svg width="14" height="16"><use href="#check"/></svg><span>Equipment Included</span></li>
                </ul>
                <button class="btn btn-club"><span>JOIN EVENT</span></button></div></div>
              <div class="col-6"><div class="panel-card raised">
                <h4><svg width="24" viewBox="0 0 512 512"><path d="M4.100 38.200C1.400 34.200 0 29.400 0 24.600C0 11 11 0 24.600 0H133.900c11.200 0 21.700 5.900 27.400 15.500l68.500 114.100c-48.200 6.100-91.300 28.600-123.400 61.900L4.100 38.200zm503.700 0L405.600 191.500c-32.100-33.300-75.200-55.800-123.400-61.900L350.700 15.500C356.500 5.900 366.900 0 378.100 0H487.400C501 0 512 11 512 24.600c0 4.800-1.400 9.600-4.100 13.600zM80 336a176 176 0 1 1 352 0A176 176 0 1 1 80 336zm184.400-94.900c-3.400-7-13.300-7-16.800 0l-22.400 45.400c-1.400 2.800-4 4.700-7 5.100L168 298.900c-7.700 1.100-10.700 10.500-5.200 16l36.300 35.400c2.200 2.200 3.200 5.200 2.700 8.300l-8.600 49.900c-1.300 7.600 6.700 13.500 13.600 9.900l44.800-23.600c2.700-1.400 6-1.400 8.700 0l44.800 23.600c6.900 3.600 14.900-2.200 13.600-9.900l-8.600-49.900c-.5-3 .5-6.100 2.700-8.300l36.300-35.400c5.600-5.400 2.500-14.800-5.200-16l-50.100-7.300c-3-.4-5.700-2.400-7-5.100l-22.400-45.400z"/></svg><span>Pro League Championship</span></h4>
                <p><span>December 15-17, 2023</span></p>
                <ul class="list-unstyled mb-3">
                  <li><svg width="14" height="16"><use href="#check"/></svg><span>Grand Prize: Rp 15.000.000</span></li>
                  <li><svg width="14" height="16"><use href="#check"/></svg><span>Professional Category Only</span></li>
                  <li><svg width="14" height="16"><use href="#check"/></svg><span>Live Streaming Event</span></li>
                </ul>
                <button class="btn btn-club"><span>LEARN MORE</span></button></div></div>
              <div class="col-6"><div class="panel-card">
                <h4><svg width="30" viewBox="0 0 640 512"><path d="M144 0a80 80 0 1 1 0 160A80 80 0 1 1 144 0zM512 0a80 80 0 1 1 0 160A80 80 0 1 1 512 0zM0 298.700C0 239.800 47.800 192 106.700 192h42.700c15.900 0 31 3.500 44.600 9.700c-1.300 7.200-1.900 14.700-1.900 22.300c0 38.200 16.800 72.500 43.300 96H21.300C9.600 320 0 310.400 0 298.700zM405.300 320h-.7c26.600-23.500 43.300-57.800 43.300-96c0-7.600-.7-15-1.900-22.300c13.600-6.300 28.700-9.700 44.600-9.700h42.700C592.200 192 640 239.800 640 298.700c0 11.800-9.600 21.300-21.300 21.300H405.300zM224 224a96 96 0 1 1 192 0 96 96 0 1 1-192 0zM128 485.300C128 411.700 187.700 352 261.300 352H378.700C452.300 352 512 411.700 512 485.300c0 14.700-11.900 26.700-26.700 26.700H154.700c-14.700 0-26.700-11.900-26.700-26.700z"/></svg><span>Community Gathering</span></h4>
                <p><span>Last Sunday of Every Month</span></p>
                <ul class="list-unstyled mb-3">
                  <li><svg width="14" height="16"><use href="#check"/></svg><span>Friendly Matches</span></li>
                  <li><svg width="14" height="16"><use href="#check"/></svg><span>Free Snacks &amp; Drinks</span></li>
                  <li><svg width="14" height="16"><use href="#check"/></svg><span>Networking Opportunity</span></li>
                </ul>
                <button class="btn btn-club"><span>RSVP NOW</span></button></div></div>
            </div>
            <h2 class="sec-title"><span>Our Billiard Club Gallery</span></h2>
          </div>
        </div></div>
        <div class="scroller d-flex flex-column align-items-center">
          <svg width="8" height="6"><path d="M0 6 4 1l4 5z" fill="#fff"/></svg>
          <div class="thumb"></div>
          <svg class="mt-auto" width="8" height="6"><path d="M0 0l4 5 4-5z" fill="#d0d0d0"/></svg>
        </div>
        <div class="side d-flex flex-column align-items-center">
          <svg width="20" height="20"><use href="#sparkle"/></svg>
          <svg width="20" height="20" viewBox="0 0 20 20"><g fill="none" stroke="#d8d8dc" stroke-width="1.500"><rect x="2.500" y="5" width="10.500" height="10.500" rx="1.500"/><path d="M13 9l4-3.500v9.500l-4-3.500M5 7.500h5"/></g></svg>
          <svg width="20" height="20"><use href="#wallet"/></svg>
          <svg width="20" height="20" viewBox="0 0 20 20" fill="none" stroke="#d8d8dc" stroke-width="1.500"><path d="M16.500 14H5a1.700 1.700 0 0 0 0 3.300h11.500V2.700H5q-1.500 0-1.500 1.500V15.500M8 3v5.500l2-1.500 2 1.500V3"/></svg>
          <svg width="20" height="20" viewBox="0 0 20 20" fill="none" stroke="#d8d8dc" stroke-width="1.500"><path d="M2.700 3.700h14.600v12.500H2.700zM10 3.700v14M5 7h3M5 10h3M5 13h3M12 7h3M12 10h3M12 13h3"/></svg>
          <svg width="20" height="20" viewBox="0 0 20 20"><path d="M10 4v12M4 10h12" stroke="#d8d8dc" stroke-width="1.500"/></svg>
          <svg class="mt-auto mb-0" width="20" height="20" viewBox="0 0 20 20" fill="none" stroke="#d8d8dc" stroke-width="1.500" stroke-linejoin="round"><path d="M8.500 2.500h3l.6 2.300 1.600.9 2.300-.7 1.500 2.600L15.800 9.300v1.600l1.700 1.600-1.500 2.600-2.300-.7-1.600.9-.6 2.300h-3l-.6-2.300-1.600-.9-2.300.7-1.500-2.600 1.700-1.600V9.300L2.500 7.600 4 5l2.300.7 1.600-.9z"/><circle cx="10" cy="10" r="2.200"/></svg>
        </div>
      </div>
    </main>
  </div>
</div>
</body>
</html>
